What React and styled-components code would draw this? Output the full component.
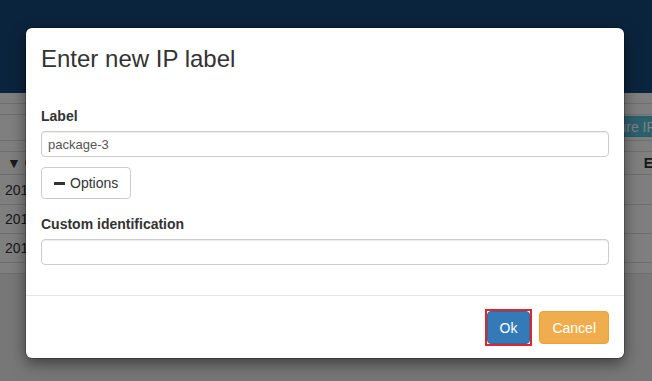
import React from 'react'
import styled, { createGlobalStyle } from 'styled-components'

const GlobalStyle = createGlobalStyle`
  html, body {
    margin: 0;
    padding: 0;
    background: #eeeeee;
    font-family: "Liberation Sans", Arial, Helvetica, sans-serif;
    font-size: 14px;
    color: #333;
    overflow: hidden;
  }
`

const Page = styled.div`
  position: relative;
  width: 652px;
  height: 381px;
  overflow: hidden;
`
const Navbar = styled.div`
  height: 93px;
  background: #16497b;
`
const Panel = styled.div`
  background: #fff;
`
const Strip = styled.div`
  height: ${(p) => p.h}px;
  border-bottom: 1px solid #dddddd;
`
const Toolbar = styled.div`
  display: flex;
  height: 24px;
  padding-top: 1px;
  border-bottom: 1px solid #dddddd;
`
const InfoButton = styled.button`
  margin-left: 565px;
  height: 21px;
  padding: 0 12px;
  border: 1px solid #46b8da;
  border-radius: 3px;
  background: #5bc0de;
  color: #fff;
  font: inherit;
  font-size: 14px;
  white-space: nowrap;
`
const Row = styled.div`
  display: flex;
  justify-content: space-between;
  align-items: center;
  height: ${(p) => p.h}px;
  padding: 0 0 0 ${(p) => (p.head ? 7 : 5)}px;
  border-bottom: 1px solid #dddddd;
  font-weight: ${(p) => (p.head ? 700 : 400)};
  color: #333;
  white-space: nowrap;
`
const Caret = styled.span`
  font-size: 14px;
  margin-right: 4px;
`
const EdgeCell = styled.span`
  margin-right: -1px;
`

const Backdrop = styled.div`
  position: absolute;
  inset: 0;
  background: rgba(0, 0, 0, 0.5);
`
const Modal = styled.div`
  position: absolute;
  left: 26px;
  top: 28px;
  width: 598px;
  background: #fff;
  border-radius: 6px;
  box-shadow: 0 0 0 1px rgba(0, 0, 0, 0.2), 0 5px 15px rgba(0, 0, 0, 0.5);
`
const Header = styled.div`
  padding: 18px 15px 19px;
`
const Title = styled.h4`
  margin: 0;
  font-size: 24px;
  line-height: 26px;
  font-weight: 400;
  color: #333;
`
const Body = styled.div`
  padding: 15px;
`
const Group = styled.div`
  display: flex;
  flex-direction: column;
  align-items: flex-start;
  margin-bottom: 15px;
`
const Label = styled.label`
  font-weight: 700;
  font-size: 14px;
  line-height: 20px;
  margin-bottom: 5px;
`
const Input = styled.input`
  box-sizing: border-box;
  width: 100%;
  height: 26px;
  padding: 0 6px;
  border: 1px solid #cccccc;
  border-radius: 4px;
  font-family: inherit;
  font-size: 13px;
  color: #555;
  box-shadow: inset 0 1px 1px rgba(0, 0, 0, 0.075);
  outline: none;
`
const Button = styled.button`
  display: inline-flex;
  align-items: center;
  gap: 5px;
  box-sizing: border-box;
  height: ${(p) => p.h || 33}px;
  margin-top: ${(p) => p.mt || 0}px;
  padding: 0 12px;
  border: 1px solid ${(p) => p.border};
  border-radius: 4px;
  background: ${(p) => p.bg};
  color: ${(p) => p.color};
  font-family: inherit;
  font-size: 14px;
  outline: none;
`
const FocusRing = styled.span`
  display: flex;
  margin: -2px 0;
  border: 2px solid #e0262b;
`
const Minus = styled.span`
  display: inline-block;
  width: 11px;
  height: 3px;
  background: #333;
`
const Footer = styled.div`
  display: flex;
  justify-content: flex-end;
  align-items: center;
  gap: 7px;
  padding: 15px 15px 14px;
  border-top: 1px solid #e5e5e5;
`

export default function App() {
  return (
    <Page>
      <GlobalStyle />
      <Navbar />
      <Panel>
        <Strip h={10} />
        <Strip h={10} />
        <Toolbar>
          <InfoButton>Configure IP</InfoButton>
        </Toolbar>
        <Strip h={10} />
        <Row h={22} head>
          <span>
            <Caret>▼</Caret>Created
          </span>
          <EdgeCell>E</EdgeCell>
        </Row>
        <Row h={29}>2017-04-12 10:21</Row>
        <Row h={28}>2017-04-12 10:19</Row>
        <Row h={28}>2017-04-11 16:03</Row>
        <Strip h={10} />
      </Panel>
      <Backdrop />
      <Modal>
        <Header>
          <Title>Enter new IP label</Title>
        </Header>
        <Body>
          <Group>
            <Label>Label</Label>
            <Input defaultValue="package-3" />
            <Button mt={10} h={32} bg="#fff" border="#cccccc" color="#333">
              <Minus />
              Options
            </Button>
          </Group>
          <Group>
            <Label>Custom identification</Label>
            <Input />
          </Group>
        </Body>
        <Footer>
          <FocusRing>
            <Button bg="#337ab7" border="#2e6da4" color="#fff">Ok</Button>
          </FocusRing>
          <Button bg="#f0ad4e" border="#eea236" color="#fff">Cancel</Button>
        </Footer>
      </Modal>
    </Page>
  )
}
